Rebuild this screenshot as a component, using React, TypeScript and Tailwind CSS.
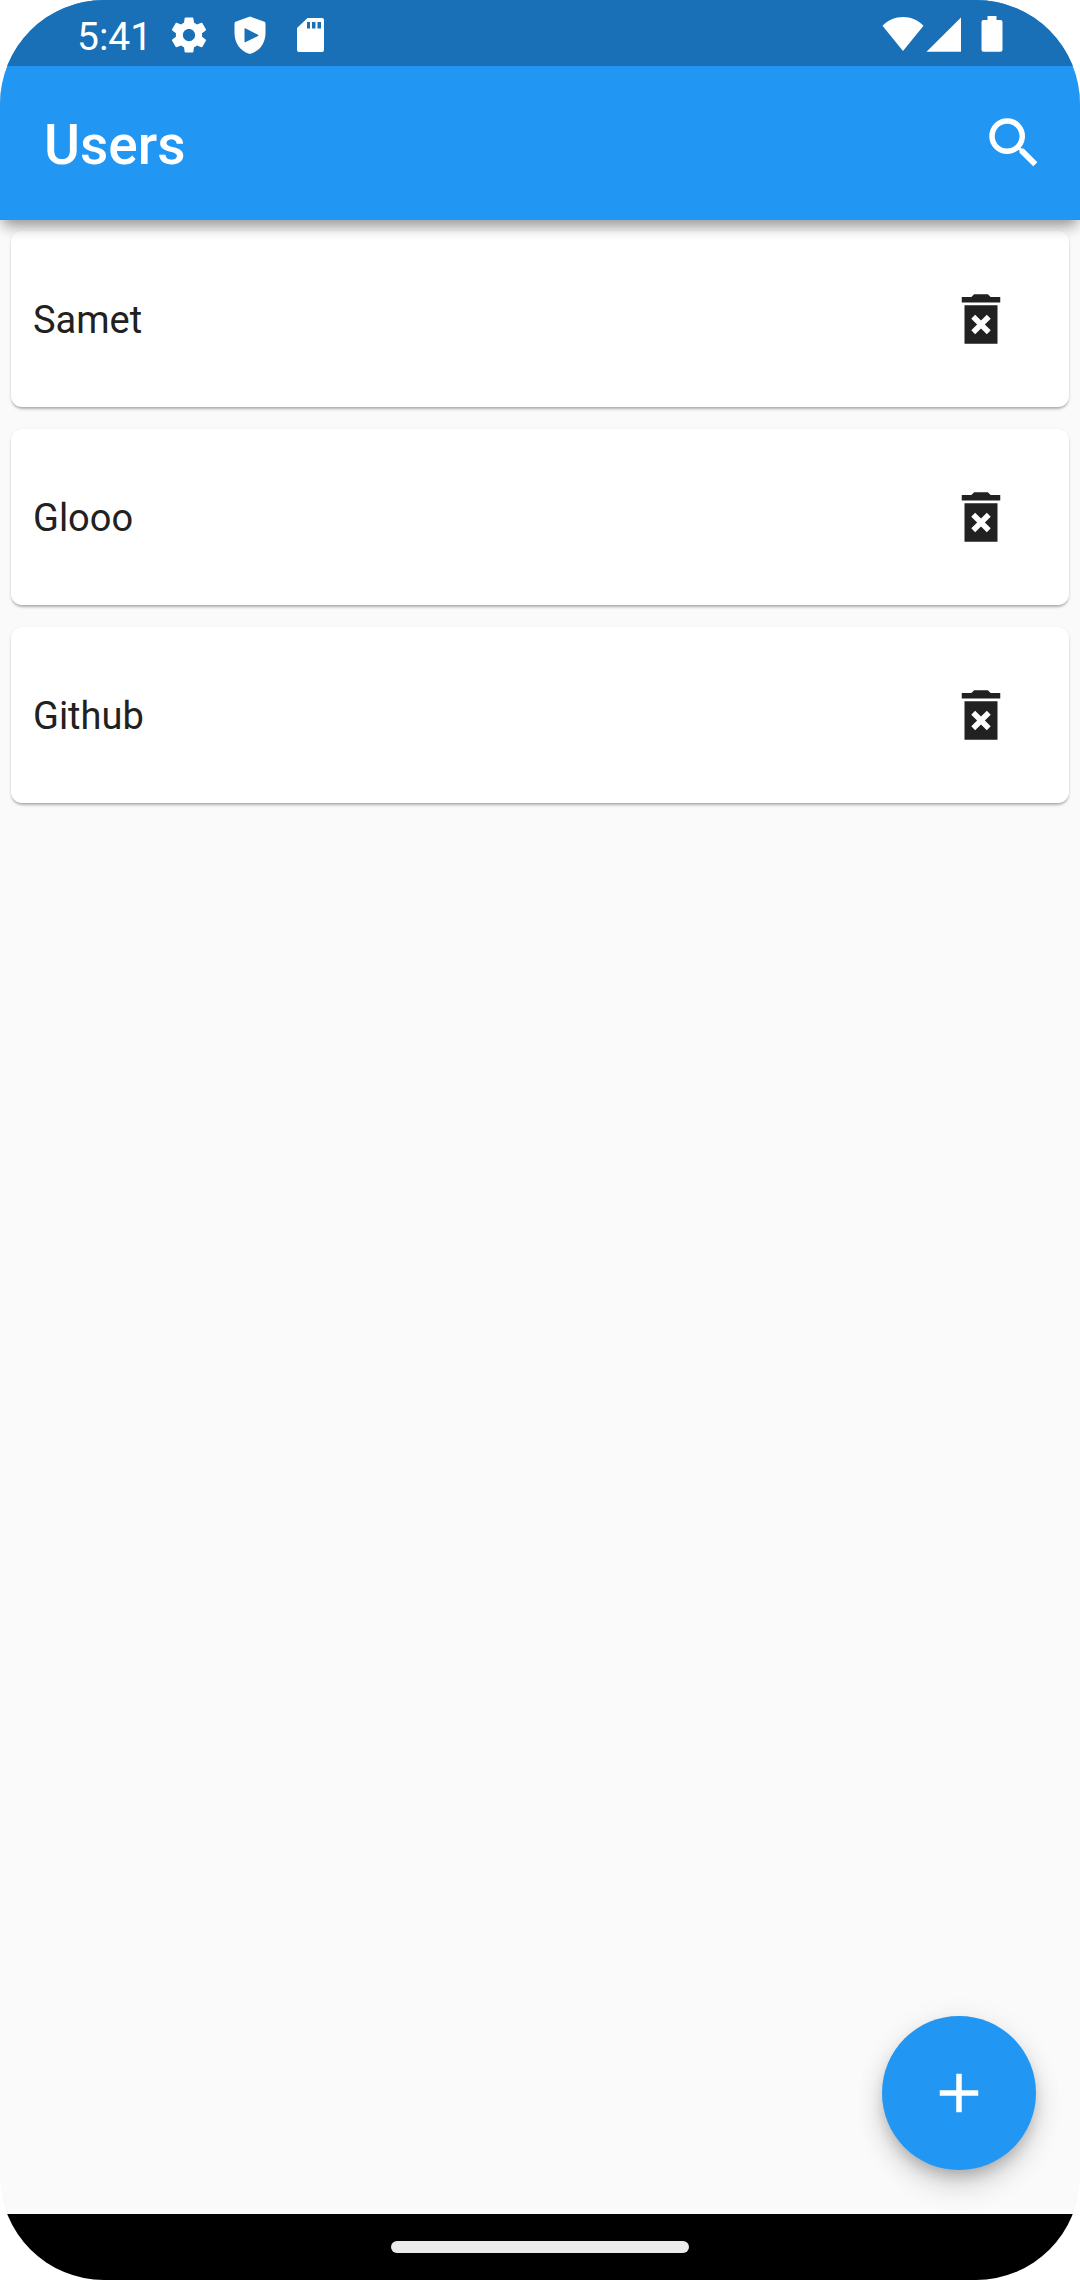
import React from "react";

const users = ["Samet", "Glooo", "Github"];

function SettingsIcon() {
  return (
    <svg viewBox="0 0 24 24" className="size-[42px]" fill="currentColor" aria-hidden="true">
      <path d="M19.43 12.98c.04-.32.07-.64.07-.98s-.03-.66-.07-.98l2.11-1.65c.19-.15.24-.42.12-.64l-2-3.46c-.12-.22-.39-.3-.61-.22l-2.49 1c-.52-.4-1.080-.73-1.690-.98l-.38-2.650C14.460 2.180 14.250 2 14 2h-4c-.25 0-.46.18-.49.42l-.38 2.650c-.61.25-1.170.59-1.690.98l-2.490-1c-.23-.09-.49 0-.61.22l-2 3.460c-.13.22-.07.49.12.64l2.110 1.650c-.04.32-.07.65-.07.98s.03.66.07.98l-2.110 1.650c-.19.15-.24.42-.12.64l2 3.460c.12.22.39.3.61.22l2.490-1c.52.4 1.080.73 1.690.98l.38 2.650c.03.24.24.42.49.42h4c.25 0 .46-.18.49-.42l.38-2.650c.61-.25 1.170-.59 1.690-.98l2.490 1c.23.09.49 0 .61-.22l2-3.460c.12-.22.07-.49-.12-.64l-2.110-1.650zM12 15.500c-1.930 0-3.500-1.570-3.500-3.500s1.570-3.500 3.500-3.500 3.500 1.570 3.500 3.500-1.570 3.500-3.500 3.500z" />
    </svg>
  );
}

function ShieldIcon() {
  return (
    <svg viewBox="0 0 42 42" className="size-[42px]" fill="currentColor" aria-hidden="true">
      <path
        fillRule="evenodd"
        d="M21 2.500 L35.500 7.800 Q36.500 8.300 36.500 9.500 V18.500 C36.500 28.500 31.500 37 21 40 C10.500 37 5.500 28.500 5.500 18.500 V9.500 Q5.500 8.300 6.500 7.800 Z M15.500 15 V27.500 Q15.500 28.800 16.700 28.100 L29 22 Q30 21.300 29 20.700 L16.700 14.500 Q15.500 13.900 15.500 15 Z"
      />
    </svg>
  );
}

function SdCardIcon() {
  return (
    <svg viewBox="0 0 42 42" className="size-[42px]" fill="currentColor" aria-hidden="true">
      <path
        fillRule="evenodd"
        d="M17.500 4 H32 Q34 4 34 6 V36 Q34 38 32 38 H9 Q7 38 7 36 V14 Z M17 8 V14.500 H20 V8 Z M22 8 V14.500 H25.500 V8 Z M27.500 8 V14.500 H31 V8 Z"
      />
    </svg>
  );
}

function WifiIcon() {
  return (
    <svg viewBox="0 0 42 36" className="h-9 w-[42px]" fill="currentColor" aria-hidden="true">
      <path d="M21 35 L0.500 9.700 C6 4 13 1 21 1 C29 1 36 4 41.500 9.700 Z" />
    </svg>
  );
}

function SignalIcon() {
  return (
    <svg viewBox="0 0 36 36" className="size-9" fill="currentColor" aria-hidden="true">
      <path d="M0.500 35.700 L35 1.500 V35.700 Z" />
    </svg>
  );
}

function BatteryIcon() {
  return (
    <svg viewBox="0 0 22 36" className="h-9 w-[22px]" fill="currentColor" aria-hidden="true">
      <path d="M6.500 0 H15.500 V4 H19.500 Q21.500 4 21.500 6 V33.700 Q21.500 35.700 19.500 35.700 H2.500 Q0.500 35.700 0.500 33.700 V6 Q0.500 4 2.500 4 H6.500 Z" />
    </svg>
  );
}

function SearchIcon() {
  return (
    <svg viewBox="0 0 24 24" className="size-[66px]" fill="currentColor" aria-hidden="true">
      <path d="M15.5 14h-.79l-.28-.27A6.471 6.471 0 0 0 16 9.500 6.500 6.500 0 1 0 9.500 16c1.610 0 3.090-.59 4.230-1.570l.27.28v.79l5 4.990L20.490 19l-4.990-5zm-6 0C7.010 14 5 11.990 5 9.500S7.010 5 9.500 5 14 7.010 14 9.500 11.990 14 9.500 14z" />
    </svg>
  );
}

function DeleteIcon() {
  return (
    <svg viewBox="0 0 24 24" className="size-[66px]" fill="currentColor" aria-hidden="true">
      <path d="M6 21h12V7H6v14zm2.460-9.120l1.410-1.410L12 12.590l2.120-2.120 1.410 1.410L13.410 14l2.120 2.120-1.410 1.410L12 15.410l-2.120 2.120-1.410-1.410L10.590 14l-2.130-2.120zM15.500 4l-1-1h-5l-1 1H5v2h14V4z" />
    </svg>
  );
}

function AddIcon() {
  return (
    <svg viewBox="0 0 24 24" className="size-[66px]" fill="currentColor" aria-hidden="true">
      <path d="M19 13h-6v6h-2v-6H5v-2h6V5h2v6h6v2z" />
    </svg>
  );
}

function StatusBar() {
  return (
    <div className="flex h-[66px] items-center justify-between bg-[#1970b6] px-[77px] text-white">
      <div className="flex items-center gap-[19px] pt-1">
        <div className="flex items-center gap-4">
          <span className="pt-1 text-[39px] leading-none">5:41</span>
          <SettingsIcon />
        </div>
        <ShieldIcon />
        <SdCardIcon />
      </div>
      <div className="flex items-center pt-[2px]">
        <WifiIcon />
        <span className="pl-[2px]">
          <SignalIcon />
        </span>
        <span className="pl-[19px]">
          <BatteryIcon />
        </span>
      </div>
    </div>
  );
}

function UserCard({ name }: { name: string }) {
  return (
    <li className="flex h-44 items-center justify-between rounded-[11px] bg-white px-[22px] shadow-[0_3px_3px_-1px_rgba(0,0,0,0.25),0_1px_3px_rgba(0,0,0,0.12)]">
      <span className="pt-[2px] text-[38px] leading-[56px]">{name}</span>
      <button type="button" aria-label={`Delete ${name}`} className="flex size-[132px] items-center justify-center">
        <DeleteIcon />
      </button>
    </li>
  );
}

export default function App() {
  return (
    <div className="min-h-screen bg-white font-[Roboto,sans-serif] text-[#212121]">
      <div className="flex min-h-screen flex-col overflow-hidden rounded-[104px] bg-[#fafafa]">
        <header className="relative z-10 bg-[#2196f3] text-white shadow-[0_9px_14px_-3px_rgba(0,0,0,0.32),0_5px_14px_-3px_rgba(0,0,0,0.16)]">
          <StatusBar />
          <div className="flex h-[154px] items-center justify-between pl-11">
            <h1 className="pt-1 text-[55px] leading-[64px] font-medium">Users</h1>
            <button type="button" aria-label="Search" className="flex size-[132px] items-center justify-center">
              <SearchIcon />
            </button>
          </div>
        </header>

        <main className="relative flex-1">
          <ul className="flex flex-col gap-[22px] p-[11px]">
            {users.map((name) => (
              <UserCard key={name} name={name} />
            ))}
          </ul>
          <button
            type="button"
            aria-label="Add user"
            className="absolute right-11 bottom-11 flex size-[154px] items-center justify-center rounded-full bg-[#2196f3] text-white shadow-[0_8px_14px_-3px_rgba(0,0,0,0.2),0_16px_28px_rgba(0,0,0,0.14),0_3px_32px_rgba(0,0,0,0.06)]"
          >
            <AddIcon />
          </button>
        </main>

        <footer className="flex h-[66px] items-center justify-center bg-black">
          <div className="h-3 w-[298px] rounded-full bg-[#ebebeb]" />
        </footer>
      </div>
    </div>
  );
}
